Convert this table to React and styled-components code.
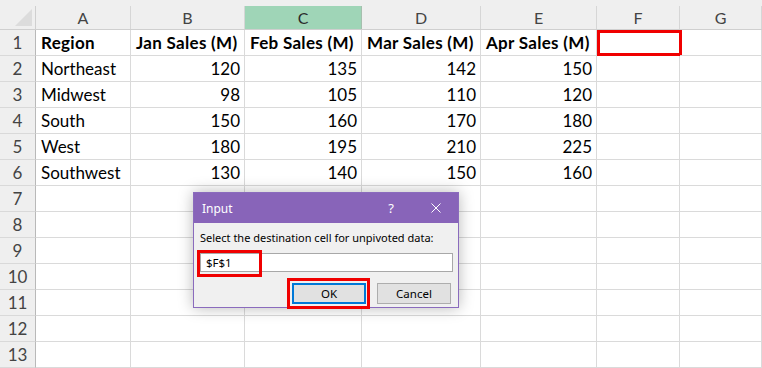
import React from "react";
import styled, { createGlobalStyle, css } from "styled-components";

const GlobalStyle = createGlobalStyle`
  html, body {
    margin: 0;
    padding: 0;
    background: #ffffff;
    overflow: hidden;
  }
  * {
    box-sizing: border-box;
  }
`;

const columns = ["A", "B", "C", "D", "E", "F", "G"];
const widths = "36px 95px 114px 117px 119px 116px 83px 1fr";

const rows = [
  ["Region", "Jan Sales (M)", "Feb Sales (M)", "Mar Sales (M)", "Apr Sales (M)"],
  ["Northeast", 120, 135, 142, 150],
  ["Midwest", 98, 105, 110, 120],
  ["South", 150, 160, 170, 180],
  ["West", 180, 195, 210, 225],
  ["Southwest", 130, 140, 150, 160],
];

const TOTAL_ROWS = 13;

const App = () => {
  return (
    <>
      <GlobalStyle />
      <Screen>
        <Sheet>
          <HeaderRow>
            <Corner>
              <CornerTriangle />
            </Corner>
            {columns.map((c) => (
              <ColHead key={c} $selected={c === "C"}>
                {c}
              </ColHead>
            ))}
          </HeaderRow>
          {Array.from({ length: TOTAL_ROWS }, (_, r) => {
            const data = rows[r] || [];
            return (
              <Row key={r}>
                <RowHead>{r + 1}</RowHead>
                {columns.map((c, ci) => {
                  const v = data[ci];
                  const isNum = typeof v === "number";
                  return (
                    <Cell
                      key={c}
                      $num={isNum}
                      $bold={r === 0}
                      $marked={r === 0 && c === "F"}
                    >
                      {v}
                    </Cell>
                  );
                })}
              </Row>
            );
          })}
        </Sheet>

        <Dialog>
          <TitleBar>
            <Title>Input</Title>
            <TitleButtons>
              <HelpMark>?</HelpMark>
              <CloseIcon viewBox="0 0 10 10">
                <path d="M0.5 0.5 L9.5 9.5 M9.5 0.5 L0.5 9.5" stroke="#ffffff" strokeWidth="1" fill="none" />
              </CloseIcon>
            </TitleButtons>
          </TitleBar>
          <DialogBody>
            <Prompt>Select the destination cell for unpivoted data:</Prompt>
            <InputWrap>
              <RefInput defaultValue="$F$1" />
              <Callout $left={-3} $top={-3} $width={65} $height={27} />
            </InputWrap>
            <ButtonRow>
              <BtnWrap>
                <DlgButton $primary>OK</DlgButton>
                <Callout $left={-5} $top={-5} $width={83} $height={31} />
              </BtnWrap>
              <DlgButton>Cancel</DlgButton>
            </ButtonRow>
          </DialogBody>
        </Dialog>
      </Screen>
    </>
  );
};

export default App;

const Screen = styled.div`
  position: relative;
  width: 762px;
  height: 368px;
  overflow: hidden;
  background: #ffffff;
`;

const Sheet = styled.div`
  display: flex;
  flex-direction: column;
  font-family: Lato, "Liberation Sans", sans-serif;
  font-size: 17px;
  color: #000000;
`;

const HeaderRow = styled.div`
  flex-shrink: 0;
  display: grid;
  grid-template-columns: ${widths};
  height: 30px;
  padding-top: 6px;
  background: #efefef;
  border-bottom: 1px solid #cfcfcf;
`;

const Corner = styled.div`
  position: relative;
  border-right: 1px solid #cfcfcf;
`;

const CornerTriangle = styled.div`
  position: absolute;
  right: 3px;
  bottom: 3px;
  width: 0;
  height: 0;
  border-left: 17px solid transparent;
  border-bottom: 17px solid #dcdcdc;
`;

const ColHead = styled.div`
  display: flex;
  align-items: center;
  justify-content: center;
  border-right: 1px solid #d6d6d6;
  color: #444444;
  font-size: 16px;
  ${(p) =>
    p.$selected &&
    css`
      background: #9fd5b7;
      color: #2b2b2b;
      border-right-color: #a6bfae;
    `}
`;

const Row = styled.div`
  flex-shrink: 0;
  display: grid;
  grid-template-columns: ${widths};
  height: 26px;
`;

const RowHead = styled.div`
  display: flex;
  align-items: center;
  justify-content: center;
  background: #efefef;
  border-right: 1px solid #b9b9b9;
  border-bottom: 1px solid #d9d9d9;
  color: #444444;
`;

const Cell = styled.div`
  position: relative;
  display: flex;
  align-items: center;
  justify-content: ${(p) => (p.$num ? "flex-end" : "flex-start")};
  padding: 0 4px 0 5px;
  border-right: 1px solid #dadada;
  border-bottom: 1px solid #dadada;
  font-weight: ${(p) => (p.$bold ? 700 : 400)};
  letter-spacing: ${(p) => (p.$bold ? "0.3px" : "0")};
  white-space: nowrap;
  ${(p) =>
    p.$marked &&
    css`
      &::after {
        content: "";
        position: absolute;
        left: 0;
        top: 0;
        right: -3px;
        bottom: -1px;
        border: 3px solid #f00000;
      }
    `}
`;

const Dialog = styled.div`
  position: absolute;
  left: 193px;
  top: 192px;
  width: 266px;
  height: 116px;
  display: flex;
  flex-direction: column;
  background: #f0f0f0;
  border: 1px solid #8a6bbd;
  box-shadow: 0 0 14px rgba(0, 0, 0, 0.28);
  font-family: "Noto Sans", "Open Sans", sans-serif;
  font-size: 11px;
`;

const TitleBar = styled.div`
  display: flex;
  align-items: center;
  justify-content: space-between;
  height: 30px;
  padding: 0 17px 0 8px;
  background: #8864b9;
  color: #ffffff;
`;

const Title = styled.span`
  font-size: 12px;
`;

const TitleButtons = styled.div`
  display: flex;
  align-items: center;
  gap: 37px;
`;

const HelpMark = styled.span`
  font-size: 13px;
`;

const CloseIcon = styled.svg`
  width: 10px;
  height: 10px;
`;

const DialogBody = styled.div`
  display: flex;
  flex-direction: column;
  padding: 7px 6px 0 6px;
`;

const Prompt = styled.div`
  height: 16px;
  line-height: 16px;
  color: #000000;
  white-space: nowrap;
`;

const InputWrap = styled.div`
  position: relative;
  margin-top: 7px;
  width: 253px;
`;

const RefInput = styled.input`
  display: block;
  width: 100%;
  height: 19px;
  padding: 0 5px;
  border: 1px solid #a8a8a8;
  background: #ffffff;
  font-family: inherit;
  font-size: 11.5px;
  color: #000000;
  outline: none;
`;

const Callout = styled.div`
  position: absolute;
  left: ${(p) => p.$left}px;
  top: ${(p) => p.$top}px;
  width: ${(p) => p.$width}px;
  height: ${(p) => p.$height}px;
  border: 3px solid #f00000;
  pointer-events: none;
`;

const ButtonRow = styled.div`
  display: flex;
  justify-content: flex-end;
  gap: 11px;
  margin-top: 11px;
  padding-right: 1px;
`;

const BtnWrap = styled.div`
  position: relative;
`;

const DlgButton = styled.button`
  width: 74px;
  height: 21px;
  padding: 0;
  background: #e1e1e1;
  border: 1px solid #adadad;
  font-family: inherit;
  font-size: 11.5px;
  color: #000000;
  ${(p) =>
    p.$primary &&
    css`
      border: 2px solid #0078d7;
    `}
`;
